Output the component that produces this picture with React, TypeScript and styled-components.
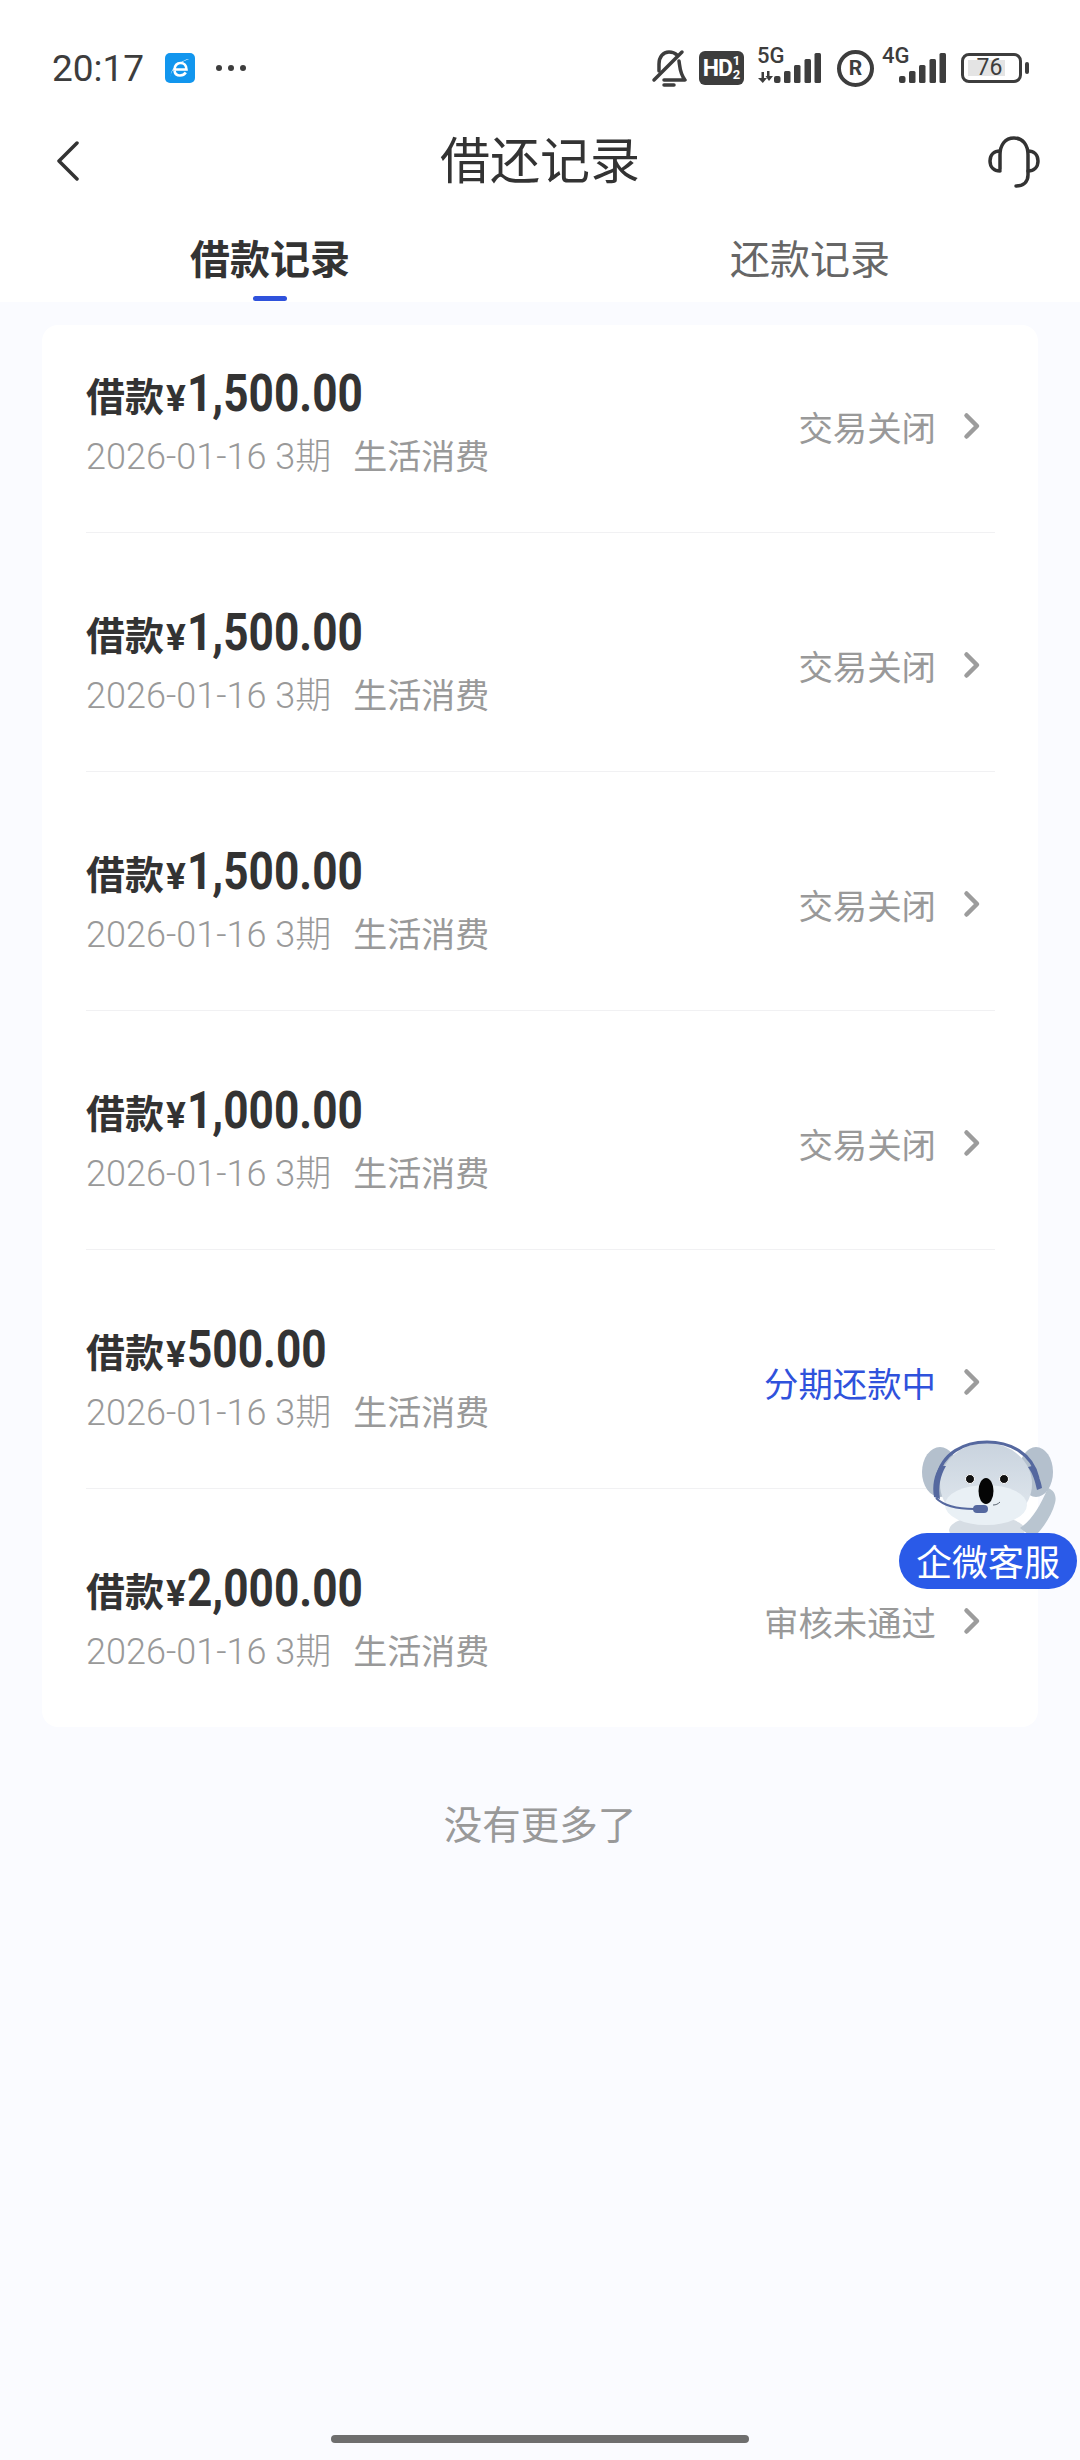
import styled, { createGlobalStyle } from 'styled-components'

const GlobalStyle = createGlobalStyle`
  html, body {
    margin: 0;
    padding: 0;
    background: #fafbff;
  }
  body {
    font-family: "Noto Sans CJK SC", "Noto Sans", sans-serif;
  }
`

const Page = styled.div`
  position: relative;
  width: 1080px;
  height: 2460px;
  overflow: hidden;
  background: #fafbff;
  color: #333333;
`

const Header = styled.header`
  height: 302px;
  background: #ffffff;
  display: flex;
  flex-direction: column;
`

const StatusBar = styled.div`
  height: 110px;
  padding: 26px 58px 0 52px;
  box-sizing: border-box;
  display: flex;
  align-items: center;
  justify-content: space-between;
  color: #3d3d3d;
`

const StatusLeft = styled.div`
  display: flex;
  align-items: center;
`

const Clock = styled.span`
  font-family: Roboto, sans-serif;
  font-size: 37px;
  width: 113px;
`

const Dots = styled.svg`
  margin-left: 20px;
`

const StatusRight = styled.div`
  display: flex;
  align-items: center;
`

const HdBadge = styled.div`
  width: 45px;
  height: 34px;
  margin-left: 12px;
  border-radius: 6px;
  background: #3d3d3d;
  color: #ffffff;
  display: flex;
  align-items: center;
  justify-content: center;
  font-family: Roboto, sans-serif;
  font-weight: 700;
`

const HdText = styled.span`
  font-size: 23px;
  letter-spacing: -1px;
`

const HdFraction = styled.span`
  display: flex;
  flex-direction: column;
  align-items: center;
  font-size: 13px;
  line-height: 14px;
  margin-left: 1px;
`

const Signal = styled.div<{ $ml: number }>`
  position: relative;
  margin-left: ${(p) => p.$ml}px;
  display: flex;
`

const NetLabel = styled.span`
  position: absolute;
  left: 0;
  top: -8px;
  font-family: Roboto, sans-serif;
  font-weight: 500;
  font-size: 22px;
  line-height: 22px;
`

const RegisterMark = styled.div`
  width: 37px;
  height: 37px;
  margin-left: 16px;
  box-sizing: border-box;
  border: 4px solid #3d3d3d;
  border-radius: 50%;
  display: flex;
  align-items: center;
  justify-content: center;
  font-family: Roboto, sans-serif;
  font-weight: 700;
  font-size: 21px;
`

const Battery = styled.div`
  position: relative;
  width: 61px;
  height: 30px;
  margin-left: 15px;
  box-sizing: border-box;
  border: 3px solid #3d3d3d;
  border-radius: 8px;
  display: flex;
  align-items: center;
  justify-content: center;

  &::before {
    content: '';
    position: absolute;
    left: 4px;
    top: 4px;
    bottom: 4px;
    width: 37px;
    background: #e4e4e4;
  }

  &::after {
    content: '';
    position: absolute;
    right: -10px;
    top: 6px;
    width: 4px;
    height: 12px;
    border-radius: 2px;
    background: #3d3d3d;
  }
`

const BatteryLevel = styled.span`
  position: relative;
  margin-right: 4px;
  font-family: Roboto, sans-serif;
  font-size: 23px;
  line-height: 24px;
`

const NavBar = styled.div`
  height: 100px;
  padding: 0 40px 0 55px;
  display: flex;
  align-items: center;
  justify-content: space-between;
  position: relative;
`

const BackIcon = styled.svg`
  margin-top: 2px;
`

const HeadsetIcon = styled.svg`
  margin-top: 3px;
`

const NavTitle = styled.h1`
  position: absolute;
  left: 0;
  right: 0;
  margin: -6px 0 0;
  text-align: center;
  font-size: 50px;
  font-weight: 400;
  line-height: 60px;
`

const Tabs = styled.div`
  display: grid;
  grid-template-columns: 1fr 1fr;
  flex: 1;
`

const Tab = styled.div<{ $active?: boolean }>`
  position: relative;
  padding-top: 2px;
  text-align: center;
  font-size: 40px;
  line-height: 90px;
  font-weight: ${(p) => (p.$active ? 700 : 400)};
  color: ${(p) => (p.$active ? '#333333' : '#666666')};

  ${(p) =>
    p.$active &&
    `&::after {
      content: '';
      position: absolute;
      left: 253px;
      bottom: 1px;
      width: 34px;
      height: 5px;
      border-radius: 3px;
      background: #2f52dc;
    }`}
`

const Card = styled.section`
  margin: 23px 42px 0;
  padding: 0 43px 0 44px;
  border-radius: 16px;
  background: #ffffff;
`

const Row = styled.div`
  height: 239px;
  padding-top: 19px;
  display: flex;
  align-items: center;
  justify-content: space-between;
  box-sizing: border-box;
  border-bottom: 1px solid #f1f1f3;

  &:first-child {
    height: 208px;
    padding: 0 0 12px;
  }

  &:last-child {
    height: 238px;
    border-bottom: 0;
  }
`

const RowMain = styled.div`
  display: flex;
  flex-direction: column;
`

const Amount = styled.div`
  display: flex;
  align-items: baseline;
  height: 56px;
  font-size: 39px;
  line-height: 56px;
  font-weight: 700;
`

const Figure = styled.span`
  display: inline-block;
  font-family: Roboto, sans-serif;
  font-size: 52px;
  font-weight: 700;
  transform: scaleX(0.85);
  transform-origin: left;
`

const Yen = styled.span`
  font-family: Roboto, sans-serif;
  font-size: 37px;
  font-weight: 700;
  margin: 0 1px 0 2px;
`

const Meta = styled.div`
  display: flex;
  align-items: baseline;
  margin-top: 10px;
  line-height: 46px;
  color: #999999;
`

const MetaDate = styled.span`
  font-family: Roboto, "Noto Sans CJK SC", sans-serif;
  font-weight: 300;
  font-size: 36px;
`

const MetaUse = styled.span`
  margin-left: 22px;
  font-size: 34px;
`

const RowSide = styled.div`
  display: flex;
  align-items: center;
  gap: 27px;
  margin: 7px 14px 0 0;
`

const Status = styled.span<{ $color: string }>`
  font-size: 34.4px;
  color: ${(p) => p.$color};
`

const Footer = styled.div`
  margin-top: 67px;
  text-align: center;
  font-size: 38.5px;
  line-height: 56px;
  color: #999999;
`

const HomeBar = styled.div`
  position: absolute;
  left: 331px;
  bottom: 17px;
  width: 418px;
  height: 8px;
  border-radius: 4px;
  background: #6e6e6e;
`

const Helper = styled.div`
  position: absolute;
  left: 899px;
  top: 1440px;
  width: 178px;
  height: 149px;
`

const HelperLabel = styled.div`
  position: absolute;
  left: 0;
  bottom: 0;
  width: 178px;
  height: 56px;
  border-radius: 28px;
  background: #2a5ae8;
  color: #ffffff;
  text-align: center;
  font-size: 36px;
  line-height: 54px;
`

const KoalaArt = styled.svg`
  position: absolute;
  left: 21px;
  top: -2px;
`

const records = [
  { amount: '1,500.00', status: '交易关闭', color: '#999999' },
  { amount: '1,500.00', status: '交易关闭', color: '#999999' },
  { amount: '1,500.00', status: '交易关闭', color: '#999999' },
  { amount: '1,000.00', status: '交易关闭', color: '#999999' },
  { amount: '500.00', status: '分期还款中', color: '#2f52dc' },
  { amount: '2,000.00', status: '审核未通过', color: '#999999' },
]

const SignalBars = () => (
  <svg width="47" height="30" viewBox="0 0 47 30" fill="#3d3d3d">
    <rect x="0" y="23" width="6.500" height="7" rx="2" />
    <rect x="10" y="18" width="6.500" height="12" rx="1.500" />
    <rect x="20" y="12" width="6.500" height="18" rx="1.500" />
    <rect x="30.500" y="6" width="6.500" height="24" rx="1.500" />
    <rect x="40.500" y="0" width="6.500" height="30" rx="1.500" />
  </svg>
)

const Chevron = () => (
  <svg width="18" height="28" viewBox="0 0 18 28" fill="none" stroke="#9c9c9c" strokeWidth="4.500" strokeLinecap="round" strokeLinejoin="round">
    <path d="M3.500 3.500L14 14 3.500 24.500" />
  </svg>
)

const Koala = () => (
  <KoalaArt width="140" height="100" viewBox="0 0 140 100">
    <defs>
      <linearGradient id="koalaHead" x1="0" y1="0" x2="0" y2="1">
        <stop offset="0" stopColor="#c9d3de" />
        <stop offset="1" stopColor="#e3eaf0" />
      </linearGradient>
    </defs>
    <ellipse cx="67" cy="92" rx="38" ry="14" fill="#d6dde4" />
    <path d="M100 90c12-8 20-22 28-40 6 2 9 8 7 15-3 12-12 26-22 35z" fill="#b9c5d0" />
    <ellipse cx="20" cy="34" rx="18" ry="25" fill="#b4c0cd" />
    <ellipse cx="116" cy="34" rx="17" ry="25" fill="#b4c0cd" />
    <ellipse cx="66" cy="46" rx="46" ry="41" fill="url(#koalaHead)" />
    <ellipse cx="66" cy="67" rx="41" ry="20" fill="#e9f0f5" />
    <path d="M17 40C22 15 44 4 67 4s45 11 51 36" fill="none" stroke="#55689f" strokeWidth="3" />
    <path d="M20 28c-6 9-8 20-6 31l6 2c-2-12 0-23 6-33z" fill="#55689f" />
    <path d="M112 28c6 7 9 15 10 22l-5 2c-2-9-4-16-9-23z" fill="#55689f" />
    <path d="M16 60c8 8 20 11 38 11" fill="none" stroke="#55689f" strokeWidth="2" />
    <rect x="53" y="67" width="15" height="8" rx="4" fill="#55689f" />
    <ellipse cx="66" cy="53" rx="7.500" ry="13" fill="#050505" />
    <circle cx="50" cy="41" r="4.500" fill="#111111" stroke="#ffffff" strokeWidth="1" />
    <circle cx="84" cy="41" r="4.500" fill="#111111" stroke="#ffffff" strokeWidth="1" />
    <path d="M73 67c3 0 5-1 7-3" fill="none" stroke="#5a6470" strokeWidth="1" />
  </KoalaArt>
)

export default function App() {
  return (
    <Page>
      <GlobalStyle />
      <Header>
        <StatusBar>
          <StatusLeft>
            <Clock>20:17</Clock>
            <svg width="30" height="30" viewBox="0 0 30 30">
              <rect width="30" height="30" rx="5" fill="#1296ee" />
              <path d="M21.500 16.500h-12c.3-4 2.500-6.500 6-6.500s5.900 2.500 6 6.500zM9.500 18c.5 3 2.500 4.500 5.500 4.500 2.500 0 4.500-1 5.800-3" fill="none" stroke="#ffffff" strokeWidth="2.600" />
              <path d="M6 24c-2-3 4-13 18-18-4 0-20 8-18 18z" fill="#ffffff" />
            </svg>
            <Dots width="32" height="8" viewBox="0 0 32 8" fill="#3d3d3d">
              <circle cx="4" cy="4" r="3" />
              <circle cx="16" cy="4" r="3" />
              <circle cx="28" cy="4" r="3" />
            </Dots>
          </StatusLeft>
          <StatusRight>
            <svg width="36" height="38" viewBox="0 0 36 38" fill="none" stroke="#3d3d3d" strokeWidth="3.500" strokeLinecap="round" strokeLinejoin="round">
              <path d="M8 22V15C8 8 12 3 18 3c3 0 6 1 8 3" />
              <path d="M28 12c1 7 1 13 6 19H13" />
              <path d="M3 31L31 3" />
              <path d="M13 36h10" />
            </svg>
            <HdBadge>
              <HdText>HD</HdText>
              <HdFraction>
                <span>1</span>
                <span>2</span>
              </HdFraction>
            </HdBadge>
            <Signal $ml={13}>
              <NetLabel>5G</NetLabel>
              <svg width="17" height="30" viewBox="0 0 17 30" fill="#3d3d3d">
                <path d="M4.500 19h2.500v6h3l-4.200 5L1 25h3.500zM10 18h2.500v5H16l-4 5-3.500-5H10z" />
              </svg>
              <SignalBars />
            </Signal>
            <RegisterMark>R</RegisterMark>
            <Signal $ml={8}>
              <NetLabel>4G</NetLabel>
              <svg width="17" height="30" />
              <SignalBars />
            </Signal>
            <Battery>
              <BatteryLevel>76</BatteryLevel>
            </Battery>
          </StatusRight>
        </StatusBar>
        <NavBar>
          <BackIcon width="24" height="42" viewBox="0 0 24 42" fill="none" stroke="#333333" strokeWidth="3.500" strokeLinecap="round" strokeLinejoin="round">
            <path d="M22 3L4 21l18 18" />
          </BackIcon>
          <NavTitle>借还记录</NavTitle>
          <HeadsetIcon width="52" height="54" viewBox="0 0 52 54" fill="none" stroke="#333333" strokeWidth="3.500" strokeLinecap="round" strokeLinejoin="round">
            <path d="M12 34V20C12 10 17 3 26 3s14 7 14 17v20c0 7-5 11-12 11" />
            <path d="M12 16C6 16 2 20 2 26s4 10 10 10" />
            <path d="M40 16c6 0 10 4 10 10s-4 10-10 10" />
          </HeadsetIcon>
        </NavBar>
        <Tabs>
          <Tab $active>借款记录</Tab>
          <Tab>还款记录</Tab>
        </Tabs>
      </Header>
      <Card>
        {records.map((r, i) => (
          <Row key={i}>
            <RowMain>
              <Amount>
                借款<Yen>¥</Yen>
                <Figure>{r.amount}</Figure>
              </Amount>
              <Meta>
                <MetaDate>2026-01-16 3期</MetaDate>
                <MetaUse>生活消费</MetaUse>
              </Meta>
            </RowMain>
            <RowSide>
              <Status $color={r.color}>{r.status}</Status>
              <Chevron />
            </RowSide>
          </Row>
        ))}
      </Card>
      <Footer>没有更多了</Footer>
      <Helper>
        <Koala />
        <HelperLabel>企微客服</HelperLabel>
      </Helper>
      <HomeBar />
    </Page>
  )
}
